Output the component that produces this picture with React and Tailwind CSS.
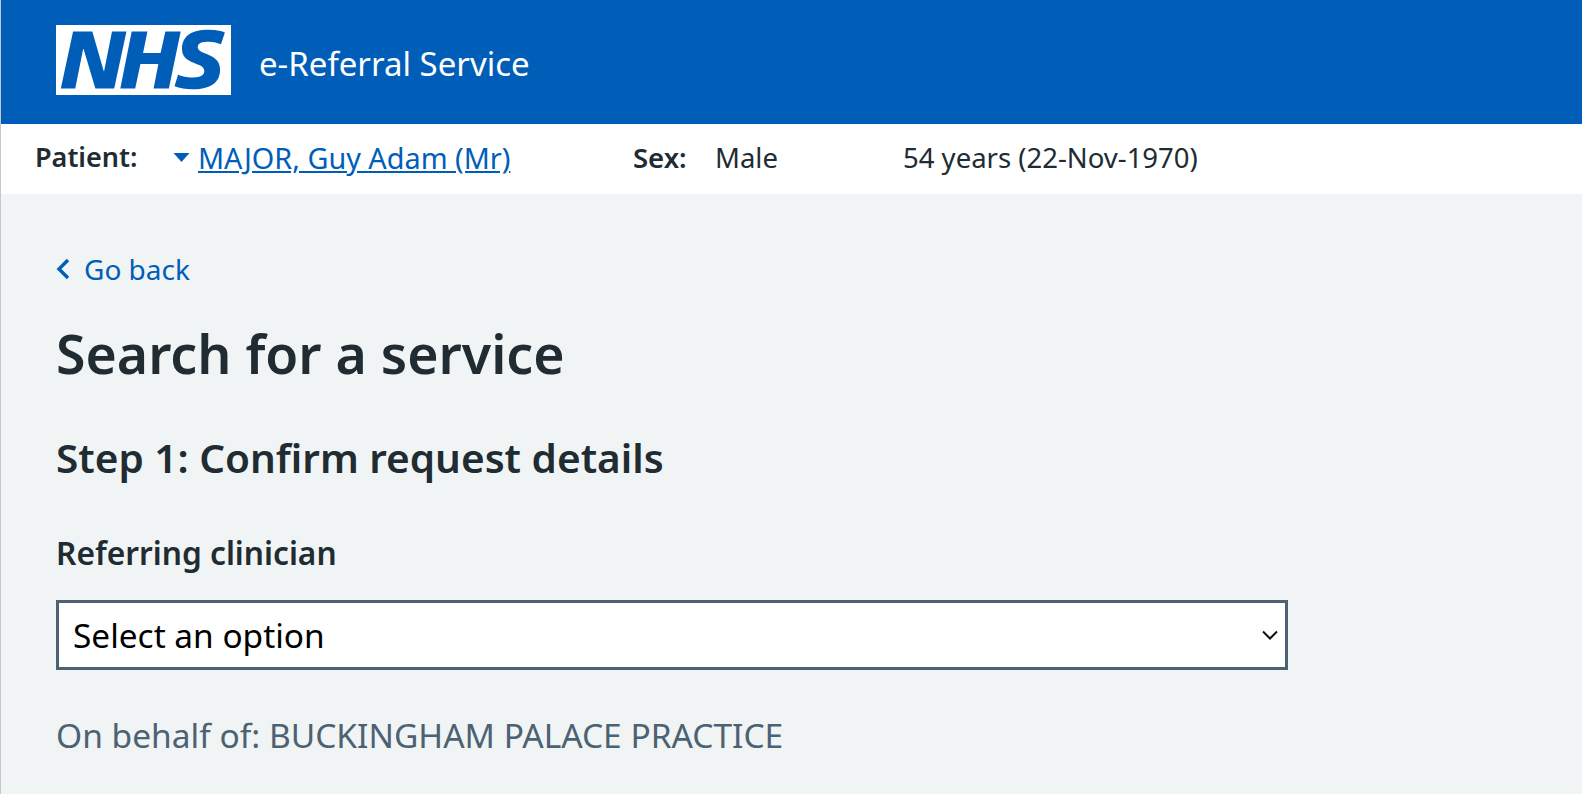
import React from "react";

const App = () => {
  return (
    <div className="h-[794px] overflow-hidden bg-[#f0f4f5] border-l border-[#c4c9cc] font-['Noto_Sans',sans-serif] text-[#212b32]">
      <header className="h-[124px] bg-[#005eb8] flex items-center -ml-px pl-[56px]">
        <svg viewBox="0 0 40 16" className="w-[175px] h-[70px] mb-[4px]" preserveAspectRatio="none" aria-label="NHS">
          <path fill="#fff" d="M0 0h40v16H0z" />
          <path
            fill="#005eb8"
            d="M3.9 1.5h4.4l2.6 9h.1l1.8-9h3.3l-2.8 13H9l-2.7-9h-.1l-1.8 9H1.1M17.3 1.5h3.6l-1 4.9h4L25 1.5h3.5l-2.7 13h-3.5l1.1-5.6h-4.1l-1.2 5.6h-3.4M37.7 4.4c-.7-.3-1.6-.6-2.8-.6-1.4 0-2.5.2-2.5 1.3 0 1.8 5.1 1.2 5.1 5.1 0 3.6-3.3 4.5-6.4 4.5-1.3 0-2.9-.3-4-.7l.8-2.7c.7.4 2.1.7 3.2.7s2.8-.2 2.8-1.5c0-2.1-5.1-1.3-5.1-5 0-3.4 2.9-4.4 5.8-4.4 1.6 0 3.1.2 4 .6"
          />
        </svg>
        <span className="ml-[28px] mt-[4px] text-[33px] text-white">e-Referral Service</span>
      </header>

      <div className="h-[70px] bg-white flex items-center pl-[34px] pb-[3px] text-[27.5px]">
        <span className="w-[138px] text-[27px] font-semibold">Patient:</span>
        <svg viewBox="0 0 16 9" className="w-[17px] h-[9px] fill-[#005eb8] mr-[8px]">
          <path d="M0 0h16L8 9z" />
        </svg>
        <a href="#" className="w-[435px] text-[28.8px] text-[#005eb8] underline">
          MAJOR, Guy Adam (Mr)
        </a>
        <span className="w-[82px] font-semibold">Sex:</span>
        <span className="w-[188px]">Male</span>
        <span>54 years (22-Nov-1970)</span>
      </div>

      <main className="pl-[55px] pt-[55px]">
        <a href="#" className="flex items-center gap-[14px] text-[#005eb8] text-[28px] leading-[40px]">
          <svg viewBox="0 0 14 24" className="w-[14px] h-[24px] fill-none stroke-[#005eb8] stroke-[3.4]">
            <path d="M12 3L3 12l9 9" />
          </svg>
          Go back
        </a>
        <h1 className="mt-[30px] text-[53.6px] leading-[70px] font-semibold">Search for a service</h1>
        <h2 className="mt-[44px] text-[40.5px] leading-[50px] font-semibold">Step 1: Confirm request details</h2>
        <label className="block mt-[50px] text-[31.7px] leading-[40px] font-semibold">Referring clinician</label>
        <div className="mt-[27px] w-[1232px] h-[70px] border-[3px] border-[#4c6272] bg-white flex items-center justify-between pl-[14px] pr-[7px] text-[33.4px] text-black">
          <span>Select an option</span>
          <svg viewBox="0 0 16 10" className="w-[16px] h-[10px] fill-none stroke-[#111] stroke-2">
            <path d="M1 1.5l7 7 7-7" />
          </svg>
        </div>
        <p className="mt-[45px] text-[33.5px] leading-[40px] text-[#4c6272]">On behalf of: BUCKINGHAM PALACE PRACTICE</p>
      </main>
    </div>
  );
};

export default App;
